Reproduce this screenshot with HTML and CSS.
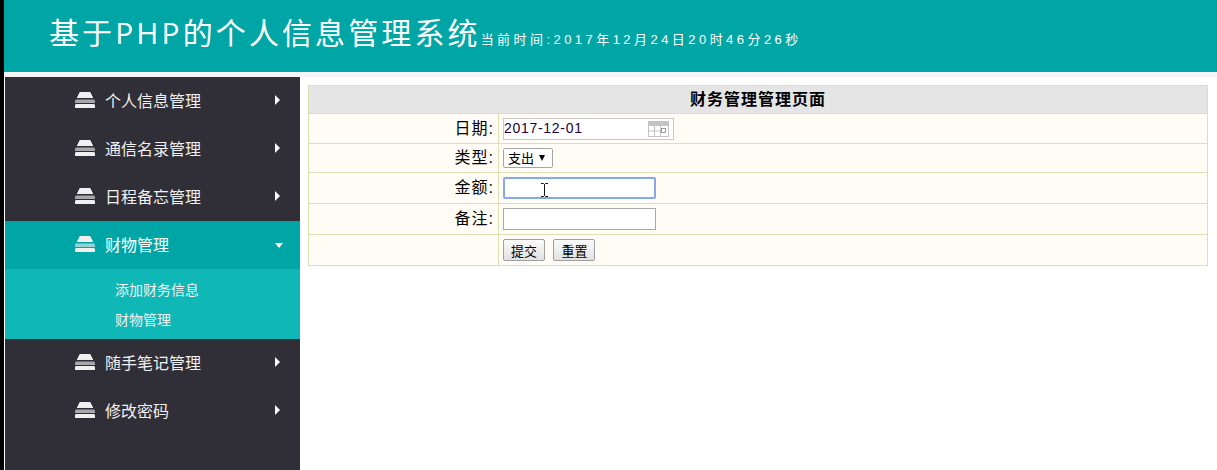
FILE: index.html
```html
<!DOCTYPE html>
<html lang="zh-CN">
<head>
    <meta charset="UTF-8">
    <title>基于PHP的个人信息管理系统</title>
    <link rel="stylesheet" href="styles.css">
</head>
<body>
    <svg class="icon-defs" width="0" height="0">
        <symbol id="layers" viewBox="0 0 20 16">
            <path d="M5 0h10l1 1v1l1 1v1l1 1v1H2V5l1-1V3l1-1V1z"/>
            <path d="M1 7.500h18l1 1v2.500H0V8.500z" opacity=".62"/>
            <path d="M1 12h18l1 1v3H0v-3z"/>
        </symbol>
    </svg>
    <header class="top">
        <h1>基于PHP的个人信息管理系统</h1>
        <span class="clock">当前时间:2017年12月24日20时46分26秒</span>
    </header>
    <div class="layout">
        <nav class="side">
            <a class="menu-item" href="#"><svg class="layers"><use href="#layers"/></svg>个人信息管理<i class="arrow"></i></a>
            <a class="menu-item" href="#"><svg class="layers"><use href="#layers"/></svg>通信名录管理<i class="arrow"></i></a>
            <a class="menu-item" href="#"><svg class="layers"><use href="#layers"/></svg>日程备忘管理<i class="arrow"></i></a>
            <a class="menu-item active" href="#"><svg class="layers"><use href="#layers"/></svg>财物管理<i class="arrow down"></i></a>
            <div class="submenu">
                <a href="#">添加财务信息</a>
                <a href="#">财物管理</a>
            </div>
            <a class="menu-item" href="#"><svg class="layers"><use href="#layers"/></svg>随手笔记管理<i class="arrow"></i></a>
            <a class="menu-item" href="#"><svg class="layers"><use href="#layers"/></svg>修改密码<i class="arrow"></i></a>
        </nav>
        <main class="content">
            <table class="form-table">
                <tr class="row-title">
                    <th colspan="2">财务管理管理页面</th>
                </tr>
                <tr class="row-date">
                    <td class="label">日期:</td>
                    <td>
                        <span class="date-box">2017-12-01
                            <svg class="cal" viewBox="0 0 21 16" width="21" height="16">
                                <rect x=".5" y=".5" width="20" height="15" fill="#fff" stroke="#c4c4c4"/>
                                <rect x="1" y="1" width="19" height="4" fill="#c4c4c4"/>
                                <path d="M1 10h11M6.500 5v10M12.500 5v10" stroke="#c4c4c4" fill="none"/>
                                <rect x="13.500" y="7.500" width="4" height="4" fill="#fff" stroke="#999"/>
                            </svg>
                        </span>
                    </td>
                </tr>
                <tr class="row-type">
                    <td class="label">类型:</td>
                    <td><span class="select-box">支出<i class="caret"></i></span></td>
                </tr>
                <tr class="row-money">
                    <td class="label">金额:</td>
                    <td>
                        <span class="text-box focused">
                            <svg class="ibeam" viewBox="0 0 7 14" width="7" height="14">
                                <path d="M0 .5h2.500l1 1 1-1H7M3.500 1.500v11M0 13.500h2.500l1-1 1 1H7" stroke="#111" fill="none"/>
                            </svg>
                        </span>
                    </td>
                </tr>
                <tr class="row-note">
                    <td class="label">备注:</td>
                    <td><span class="text-box"></span></td>
                </tr>
                <tr class="row-buttons">
                    <td class="label"></td>
                    <td>
                        <button class="btn" type="button">提交</button>
                        <button class="btn" type="button">重置</button>
                    </td>
                </tr>
            </table>
        </main>
    </div>
</body>
</html>
```

FILE: styles.css
```css
* {
    box-sizing: border-box;
}

html, body {
    height: 100%;
}

body {
    margin: 0;
    border-left: 4px solid #000;
    background-color: #fff;
    font-family: "Liberation Sans", "Noto Sans CJK SC", sans-serif;
    overflow: hidden;
}

.icon-defs {
    position: absolute;
}

.top {
    height: 72px;
    background-color: #00a6a6;
    color: #fff;
    padding-left: 45px;
    display: flex;
    align-items: flex-start;
}

.top h1 {
    margin: 12px 0 0;
    font-family: "Open Sans", "Noto Sans CJK SC", sans-serif;
    font-size: 30px;
    font-weight: 400;
    line-height: 42px;
    letter-spacing: 3.1px;
    white-space: nowrap;
}

.clock {
    margin-top: 31px;
    font-size: 13px;
    line-height: 18px;
    letter-spacing: 3.45px;
    white-space: nowrap;
}

.layout {
    display: flex;
    height: 398px;
    padding-top: 5px;
    padding-left: 1px;
    background: linear-gradient(#f5f5f5 5px, #fff 5px);
}

.side {
    width: 295px;
    flex-shrink: 0;
    background-color: #302e37;
}

.menu-item {
    height: 48px;
    display: flex;
    align-items: center;
    padding-left: 70px;
    padding-right: 20px;
    padding-bottom: 2px;
    color: #f0f0f0;
    font-size: 16px;
    text-decoration: none;
}

.menu-item.active {
    background-color: #00a6a6;
    color: #fff;
}

.layers {
    width: 20px;
    height: 16px;
    margin-right: 10px;
    margin-bottom: 1px;
    fill: #f0f0f0;
}

.arrow {
    margin-left: auto;
    width: 0;
    height: 0;
    border-style: solid;
    border-width: 5px 0 5px 5px;
    border-color: transparent transparent transparent #fff;
}

.arrow.down {
    margin-top: 2px;
    margin-right: -3px;
    border-width: 5px 4px 0;
    border-color: #fff transparent transparent;
}

.submenu {
    height: 70px;
    padding: 6px 0 4px;
    background-color: #10b7b7;
}

.submenu a {
    display: block;
    height: 30px;
    line-height: 30px;
    padding-left: 110px;
    color: #f2f2f2;
    font-size: 14px;
    text-decoration: none;
}

.content {
    flex: 1;
    padding: 8px 9px 0 8px;
}

.form-table {
    width: 100%;
    border-collapse: collapse;
    background-color: #fffcf6;
    font-size: 16px;
    color: #000;
}

.form-table th,
.form-table td {
    border: 1px solid #dcdfb4;
    padding: 0 4px;
}

.form-table th {
    background-color: #e5e5e5;
    font-size: 16px;
    font-weight: 700;
    letter-spacing: 1px;
    text-align: center;
    line-height: 24px;
}

.row-title {
    height: 28px;
}

.row-date {
    height: 30px;
}

.row-type {
    height: 29px;
}

.row-money,
.row-note,
.row-buttons {
    height: 31px;
}

.form-table .label {
    width: 190px;
    text-align: right;
    letter-spacing: 1px;
    line-height: 24px;
}

.date-box {
    width: 171px;
    height: 22px;
    border: 1px solid #c8c8c8;
    background-color: #fff;
    display: flex;
    align-items: center;
    justify-content: space-between;
    padding: 0 4px 2px 0;
    font-size: 14px;
    letter-spacing: 0.7px;
    color: #200040;
}

.cal {
    margin-top: 2px;
}

.select-box {
    width: 50px;
    height: 20px;
    border: 1px solid #a6a6a6;
    border-radius: 2px;
    background-color: #fff;
    display: flex;
    align-items: center;
    padding: 0 0 1px 4px;
    font-size: 13px;
}

.caret {
    margin-left: 5px;
    width: 0;
    height: 0;
    border-style: solid;
    border-width: 6px 3px 0;
    border-color: #000 transparent transparent;
}

.text-box {
    width: 153px;
    height: 22px;
    border: 1px solid #a9a9a9;
    background-color: #fff;
    display: flex;
    align-items: center;
}

.text-box.focused {
    border: 2px solid #86a9ea;
    border-radius: 2px;
}

.ibeam {
    margin-left: 36px;
    margin-top: 3px;
}

.btn {
    width: 42px;
    height: 22px;
    padding: 0;
    margin-right: 4px;
    border: 1px solid #a0a0a0;
    border-radius: 2px;
    background: linear-gradient(#fafafa, #e2e2e2);
    font-family: inherit;
    font-size: 13px;
    color: #000;
    vertical-align: middle;
}
```
